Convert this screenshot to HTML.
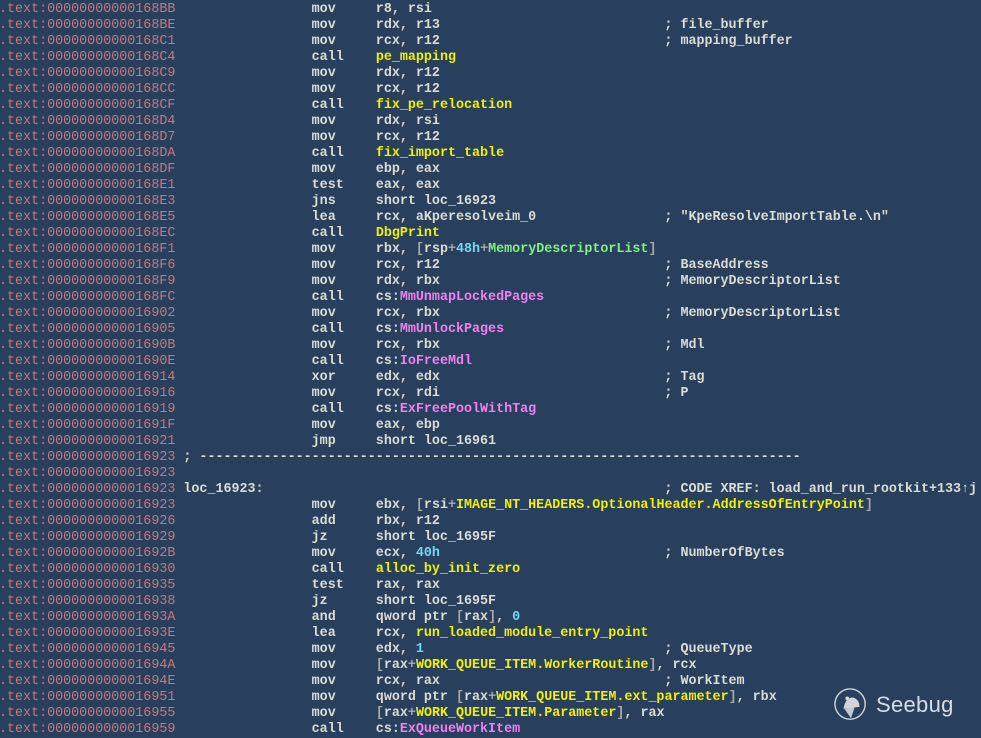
<!DOCTYPE html>
<html><head><meta charset="utf-8"><style>
html,body{margin:0;padding:0;background:#28405e;width:981px;height:737px;overflow:hidden}
pre{margin:0;position:absolute;left:-1px;top:2px;font-family:"Liberation Mono",monospace;font-size:13.37px;line-height:16px;color:#dcdcd0;white-space:pre;font-weight:bold}
.a{color:#c87878;font-weight:normal}
.y{color:#f0f000}
.g{color:#80f080}
.c{color:#70d8f0}
.p{color:#f080f0}
.s{color:#a8a8a8}
.logo{position:absolute;left:834px;top:688px}
.lt{position:absolute;left:876px;top:692px;font-family:"Liberation Sans",sans-serif;font-size:22px;color:#d8dce4;letter-spacing:0.3px}
</style></head><body>
<pre><span class="a">.text:00000000000168BB</span>                 mov     r8, rsi
<span class="a">.text:00000000000168BE</span>                 mov     rdx, r13                            ; file_buffer
<span class="a">.text:00000000000168C1</span>                 mov     rcx, r12                            ; mapping_buffer
<span class="a">.text:00000000000168C4</span>                 call    <span class="y">pe_mapping</span>
<span class="a">.text:00000000000168C9</span>                 mov     rdx, r12
<span class="a">.text:00000000000168CC</span>                 mov     rcx, r12
<span class="a">.text:00000000000168CF</span>                 call    <span class="y">fix_pe_relocation</span>
<span class="a">.text:00000000000168D4</span>                 mov     rdx, rsi
<span class="a">.text:00000000000168D7</span>                 mov     rcx, r12
<span class="a">.text:00000000000168DA</span>                 call    <span class="y">fix_import_table</span>
<span class="a">.text:00000000000168DF</span>                 mov     ebp, eax
<span class="a">.text:00000000000168E1</span>                 test    eax, eax
<span class="a">.text:00000000000168E3</span>                 jns     short loc_16923
<span class="a">.text:00000000000168E5</span>                 lea     rcx, aKperesolveim_0                ; "KpeResolveImportTable.\n"
<span class="a">.text:00000000000168EC</span>                 call    <span class="y">DbgPrint</span>
<span class="a">.text:00000000000168F1</span>                 mov     rbx, <span class="s">[</span>rsp<span class="s">+</span><span class="c">48h</span><span class="s">+</span><span class="g">MemoryDescriptorList</span><span class="s">]</span>
<span class="a">.text:00000000000168F6</span>                 mov     rcx, r12                            ; BaseAddress
<span class="a">.text:00000000000168F9</span>                 mov     rdx, rbx                            ; MemoryDescriptorList
<span class="a">.text:00000000000168FC</span>                 call    cs:<span class="p">MmUnmapLockedPages</span>
<span class="a">.text:0000000000016902</span>                 mov     rcx, rbx                            ; MemoryDescriptorList
<span class="a">.text:0000000000016905</span>                 call    cs:<span class="p">MmUnlockPages</span>
<span class="a">.text:000000000001690B</span>                 mov     rcx, rbx                            ; Mdl
<span class="a">.text:000000000001690E</span>                 call    cs:<span class="p">IoFreeMdl</span>
<span class="a">.text:0000000000016914</span>                 xor     edx, edx                            ; Tag
<span class="a">.text:0000000000016916</span>                 mov     rcx, rdi                            ; P
<span class="a">.text:0000000000016919</span>                 call    cs:<span class="p">ExFreePoolWithTag</span>
<span class="a">.text:000000000001691F</span>                 mov     eax, ebp
<span class="a">.text:0000000000016921</span>                 jmp     short loc_16961
<span class="a">.text:0000000000016923</span> ; ---------------------------------------------------------------------------
<span class="a">.text:0000000000016923</span>
<span class="a">.text:0000000000016923</span> loc_16923:                                                  ; CODE XREF: load_and_run_rootkit+133&#8593;j
<span class="a">.text:0000000000016923</span>                 mov     ebx, <span class="s">[</span>rsi<span class="s">+</span><span class="y">IMAGE_NT_HEADERS.OptionalHeader.AddressOfEntryPoint</span><span class="s">]</span>
<span class="a">.text:0000000000016926</span>                 add     rbx, r12
<span class="a">.text:0000000000016929</span>                 jz      short loc_1695F
<span class="a">.text:000000000001692B</span>                 mov     ecx, <span class="c">40h</span>                            ; NumberOfBytes
<span class="a">.text:0000000000016930</span>                 call    <span class="y">alloc_by_init_zero</span>
<span class="a">.text:0000000000016935</span>                 test    rax, rax
<span class="a">.text:0000000000016938</span>                 jz      short loc_1695F
<span class="a">.text:000000000001693A</span>                 and     qword ptr <span class="s">[</span>rax<span class="s">]</span>, <span class="c">0</span>
<span class="a">.text:000000000001693E</span>                 lea     rcx, <span class="y">run_loaded_module_entry_point</span>
<span class="a">.text:0000000000016945</span>                 mov     edx, <span class="c">1</span>                              ; QueueType
<span class="a">.text:000000000001694A</span>                 mov     <span class="s">[</span>rax<span class="s">+</span><span class="y">WORK_QUEUE_ITEM.WorkerRoutine</span><span class="s">]</span>, rcx
<span class="a">.text:000000000001694E</span>                 mov     rcx, rax                            ; WorkItem
<span class="a">.text:0000000000016951</span>                 mov     qword ptr <span class="s">[</span>rax<span class="s">+</span><span class="y">WORK_QUEUE_ITEM.ext_parameter</span><span class="s">]</span>, rbx
<span class="a">.text:0000000000016955</span>                 mov     <span class="s">[</span>rax<span class="s">+</span><span class="y">WORK_QUEUE_ITEM.Parameter</span><span class="s">]</span>, rax
<span class="a">.text:0000000000016959</span>                 call    cs:<span class="p">ExQueueWorkItem</span></pre>
<svg class="logo" width="34" height="34" viewBox="0 0 36 36"><circle cx="17" cy="17" r="16" fill="none" stroke="#d0d4dc" stroke-width="1.5"/><path d="M10 22 Q12 10 20 10 Q27 12 27 20 Z" fill="#d0d4dc"/><path d="M11 22 L18 32 L22 20 Z" fill="#c4c8d0"/><circle cx="14" cy="11" r="2" fill="#d0d4dc"/></svg>
<div class="lt">Seebug</div>
</body></html>
